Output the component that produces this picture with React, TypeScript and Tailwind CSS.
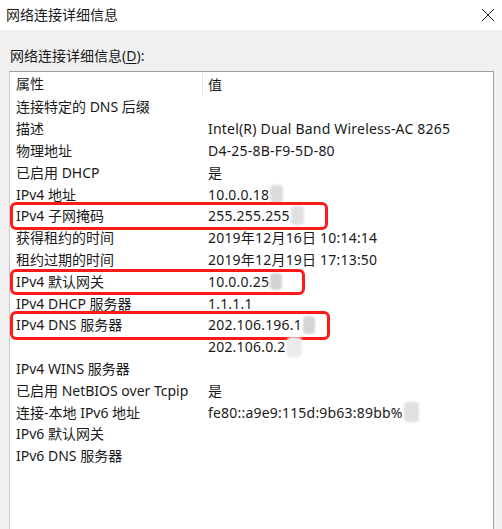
type Row = {
  k: string
  v: string
  patch?: string
  box?: string
}

const rows: Row[] = [
  { k: '连接特定的 DNS 后缀', v: '' },
  { k: '描述', v: 'Intel(R) Dual Band Wireless-AC 8265' },
  { k: '物理地址', v: 'D4-25-8B-F9-5D-80' },
  { k: '已启用 DHCP', v: '是' },
  { k: 'IPv4 地址', v: '10.0.0.18', patch: 'h-[18px] w-[13px] bg-[#dcdcdc]' },
  {
    k: 'IPv4 子网掩码',
    v: '255.255.255',
    patch: 'h-[19px] w-[13px] bg-[#e0e0e0]',
    box: '-top-[3px] -bottom-[3px] w-[318px]',
  },
  { k: '获得租约的时间', v: '2019年12月16日 10:14:14' },
  { k: '租约过期的时间', v: '2019年12月19日 17:13:50' },
  {
    k: 'IPv4 默认网关',
    v: '10.0.0.25',
    patch: 'h-[17px] w-[12px] bg-[#d4d4d4]',
    box: '-top-[1px] -bottom-[3px] w-[295px]',
  },
  { k: 'IPv4 DHCP 服务器', v: '1.1.1.1' },
  {
    k: 'IPv4 DNS 服务器',
    v: '202.106.196.1',
    patch: 'h-[18px] w-[12px] bg-[#d4d4d4]',
    box: '-top-[3px] -bottom-[4px] w-[320px]',
  },
  { k: '', v: '202.106.0.2', patch: 'h-[20px] w-[15px] bg-[#ebebeb]' },
  { k: 'IPv4 WINS 服务器', v: '' },
  { k: '已启用 NetBIOS over Tcpip', v: '是' },
  { k: '连接-本地 IPv6 地址', v: 'fe80::a9e9:115d:9b63:89bb%', patch: 'h-[20px] w-[15px] bg-[#e0e0e0]' },
  { k: 'IPv6 默认网关', v: '' },
  { k: 'IPv6 DNS 服务器', v: '' },
]

export default function App() {
  return (
    <div
      className="h-[529px] w-[502px] overflow-hidden bg-[#f0f0f0] text-[14px] text-[#1a1a1a]"
      style={{ fontFamily: '"Noto Sans", "Noto Sans CJK SC", sans-serif' }}
    >
      {/* Title bar */}
      <div className="flex h-[30px] items-center justify-between bg-white px-[6px]">
        <span className="text-[14px] leading-none">网络连接详细信息</span>
        <svg width="14" height="14" viewBox="0 0 14 14" className="mr-[1px]">
          <path d="M1 1 L13 13 M13 1 L1 13" stroke="#222" strokeWidth="1" />
        </svg>
      </div>

      {/* Body */}
      <div className="px-[9px] pt-[16px]">
        <div className="mb-[5px] pl-[1px] leading-[20px]">
          网络连接详细信息(<span className="underline underline-offset-2">D</span>):
        </div>
        <div className="h-[470px] w-[485px] border border-[#a0a0a0] border-l-[#c8c8c8] bg-white">
          <div className="flex h-[24px] items-center">
            <div className="w-[193px] border-r border-[#e5e5e5] pl-[6px] leading-[22px]">属性</div>
            <div className="pl-[5px]">值</div>
          </div>
          {rows.map((r, i) => (
            <div key={i} className="relative flex h-[21.8px] items-center whitespace-nowrap">
              <div className="w-[193px] pl-[6px]">{r.k}</div>
              <div className="flex items-center pl-[5px] tracking-[0.2px]">
                <span>{r.v}</span>
                {r.patch ? <span className={`ml-[1px] inline-block rounded-sm blur-[1px] ${r.patch}`} /> : null}
              </div>
              {r.box ? (
                <div className={`absolute left-0 rounded-[6px] border-[3px] border-[#ff1a1a] ${r.box}`} />
              ) : null}
            </div>
          ))}
        </div>
      </div>
    </div>
  )
}
